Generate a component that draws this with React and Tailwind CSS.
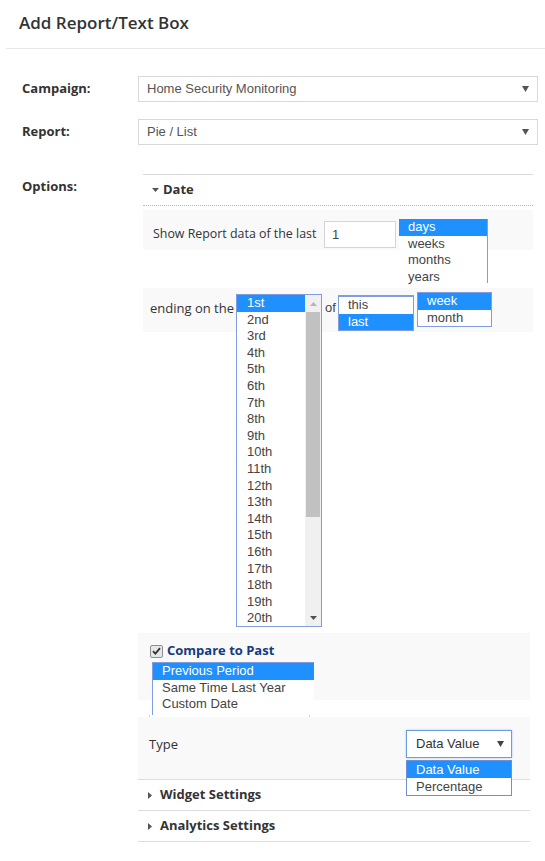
import React from 'react';

const ARIAL = "font-['Liberation_Sans',Arial,sans-serif]";
const HL = 'bg-[#1e90ff] text-white';

const days = ['1st', '2nd', '3rd', '4th', '5th', '6th', '7th', '8th', '9th', '10th', '11th', '12th', '13th', '14th', '15th', '16th', '17th', '18th', '19th', '20th'];

function Arrow({ className = '' }) {
  return (
    <svg width="7" height="6" viewBox="0 0 7 6" className={className}>
      <path d="M0 0 L7 0 L3.5 6 Z" fill="currentColor" />
    </svg>
  );
}

function Caret({ open }) {
  return open ? (
    <svg width="7" height="4" viewBox="0 0 7 4">
      <path d="M0 0 L7 0 L3.5 4 Z" fill="#555" />
    </svg>
  ) : (
    <svg width="4" height="7" viewBox="0 0 4 7">
      <path d="M0 0 L4 3.5 L0 7 Z" fill="#555" />
    </svg>
  );
}

function Select({ value }) {
  return (
    <div className={`w-[400px] h-[26px] border border-[#d9d9d9] flex items-center pl-[8px] pr-[8px] text-[13px] text-[#555] ${ARIAL}`}>
      <span className="flex-1">{value}</span>
      <Arrow className="text-[#555]" />
    </div>
  );
}

function Row({ label, className = '', children }) {
  return (
    <div className={`flex items-center ${className}`}>
      <div className="w-[138px] pl-[22px] font-bold text-[13px] text-[#333]">{label}</div>
      {children}
    </div>
  );
}

function ListBox({ items, selected, className = '', pad = 'pl-[9px]' }) {
  return (
    <div className={`bg-white text-[13px] text-[#444] leading-[16.5px] ${ARIAL} ${className}`}>
      {items.map((it) => (
        <div key={it} className={`${pad} ${it === selected ? HL : ''}`}>{it}</div>
      ))}
    </div>
  );
}

function Accordion({ title }) {
  return (
    <div className="h-[31px] border-b border-[#ddd] flex items-center pl-[10px] gap-[8px]">
      <Caret />
      <span className="font-bold text-[13px] text-[#333]">{title}</span>
    </div>
  );
}

export default function App() {
  return (
    <div className="w-[545px] min-h-[861px] bg-white font-['Open_Sans',sans-serif] text-[13px] text-[#333]">
      <div className="h-[48px] pl-[19px] pt-[11px] text-[17px] leading-[24px] font-semibold text-[#333]">
        Add Report/Text Box
      </div>
      <div className="ml-[6px] border-t border-[#e8e8e8]" />

      <div className="pt-[27px]">
        <Row label="Campaign:">
          <Select value="Home Security Monitoring" />
        </Row>
        <Row label="Report:" className="mt-[17px]">
          <Select value="Pie / List" />
        </Row>

        <div className="mt-[29px] flex">
          <div className="w-[138px] pl-[22px] pt-[3px] font-bold leading-[18px]">Options:</div>
          <div className="w-[400px]">
            {/* Date section */}
            <div className="ml-[5px] w-[390px] border-t border-[#d8d8d8]">
              <div className="h-[31px] border-b border-dotted border-[#b8b8b8] flex items-center pl-[9px] gap-[4px]">
                <Caret open />
                <span className="font-bold">Date</span>
              </div>

              <div className="mt-[4px] h-[40px] bg-[#f9f9f9] flex items-start pl-[10px]">
                <span className="w-[171px] mt-[15px] leading-[18px] whitespace-nowrap text-[12.4px]">Show Report data of the last</span>
                <div className={`mt-[11px] w-[72px] h-[27px] border border-[#d4d4d4] bg-white pl-[7px] flex items-center text-[13px] text-[#444] ${ARIAL}`}>
                  1
                </div>
                <ListBox
                  items={['days', 'weeks', 'months', 'years']}
                  selected="days"
                  className="ml-[3px] mt-[9px] w-[89px] h-[64px] border-r border-[#7f9ddf]"
                />
              </div>

              <div className="mt-[38px] h-[44px] bg-[#f9f9f9] flex items-start pl-[7px]">
                <span className="w-[86px] mt-[11px] leading-[18px] whitespace-nowrap">ending on the</span>
                <div className="mt-[6px] w-[86px] h-[333px] border border-[#7f9ddf] bg-white flex">
                  <ListBox items={days} selected="1st" className="flex-1 leading-[16.6px]" pad="pl-[10px]" />
                  <div className="w-[16px] bg-[#f0f0f0] flex flex-col items-center">
                    <div className="h-[17px] flex items-center text-[#b5b5b5]">
                      <svg width="7" height="4" viewBox="0 0 7 4"><path d="M0 4 L7 4 L3.5 0 Z" fill="currentColor" /></svg>
                    </div>
                    <div className="w-[14px] h-[205px] bg-[#c1c1c1]" />
                    <div className="flex-1" />
                    <div className="h-[17px] flex items-center text-[#505050]">
                      <svg width="7" height="4" viewBox="0 0 7 4"><path d="M0 0 L7 0 L3.5 4 Z" fill="currentColor" /></svg>
                    </div>
                  </div>
                </div>
                <span className={`w-[16px] pl-[3px] mt-[11px] leading-[18px] text-[#444] ${ARIAL}`}>of</span>
                <ListBox
                  items={['this', 'last']}
                  selected="last"
                  className="mt-[7px] w-[76px] border border-t-2 border-[#7f9ddf]"
                />
                <ListBox
                  items={['week', 'month']}
                  selected="week"
                  className="ml-[3px] mt-[4px] w-[75px] border border-[#7f9ddf]"
                />
              </div>
            </div>

            {/* Compare to past */}
            <div className="mt-[301px] w-[392px] h-[67px] bg-[#f9f9f9] pl-[12px] pt-[9px]">
              <div className="h-[18px] flex items-center gap-[4px]">
                <span className="w-[13px] h-[13px] border border-[#8f8f8f] rounded-[2px] bg-[#e6e6e6] flex items-center justify-center">
                  <svg width="9" height="8" viewBox="0 0 9 8">
                    <path d="M1 4.2 L3.4 6.6 L8 1.2" stroke="#333" strokeWidth="1.8" fill="none" />
                  </svg>
                </span>
                <span className="font-bold text-[#173a7d]">Compare to Past</span>
              </div>
              <ListBox
                items={['Previous Period', 'Same Time Last Year', 'Custom Date']}
                selected="Previous Period"
                className="mt-[2px] ml-[2px] w-[162px] h-[53px] border-l border-t border-[#7f9ddf]"
              />
              <div className="-ml-[1px] w-[161px] h-[6px] border-x border-b border-[#cfcfcf] bg-white" />
            </div>

            <div className="mt-[17px] w-[392px] h-[63px] bg-[#f9f9f9] border-b border-[#ddd] flex items-start pl-[11px] pr-[18px]">
              <span className="mt-[18px] leading-[18px]">Type</span>
              <div className="ml-auto mt-[13px] relative">
                <div className={`w-[106px] h-[28px] border border-[#6e9de6] shadow-[0_0_2px_#9ec2f5] bg-white flex items-center pl-[9px] pr-[7px] text-[13px] text-[#333] ${ARIAL}`}>
                  <span className="flex-1">Data Value</span>
                  <Arrow className="text-[#444]" />
                </div>
                <ListBox
                  items={['Data Value', 'Percentage']}
                  selected="Data Value"
                  className="absolute top-[30px] left-0 w-[106px] border border-[#6f8fd0] z-10 text-[#333] leading-[17px]"
                />
              </div>
            </div>

            <div className="w-[392px]">
              <Accordion title="Widget Settings" />
              <Accordion title="Analytics Settings" />
            </div>
          </div>
        </div>
      </div>
    </div>
  );
}
